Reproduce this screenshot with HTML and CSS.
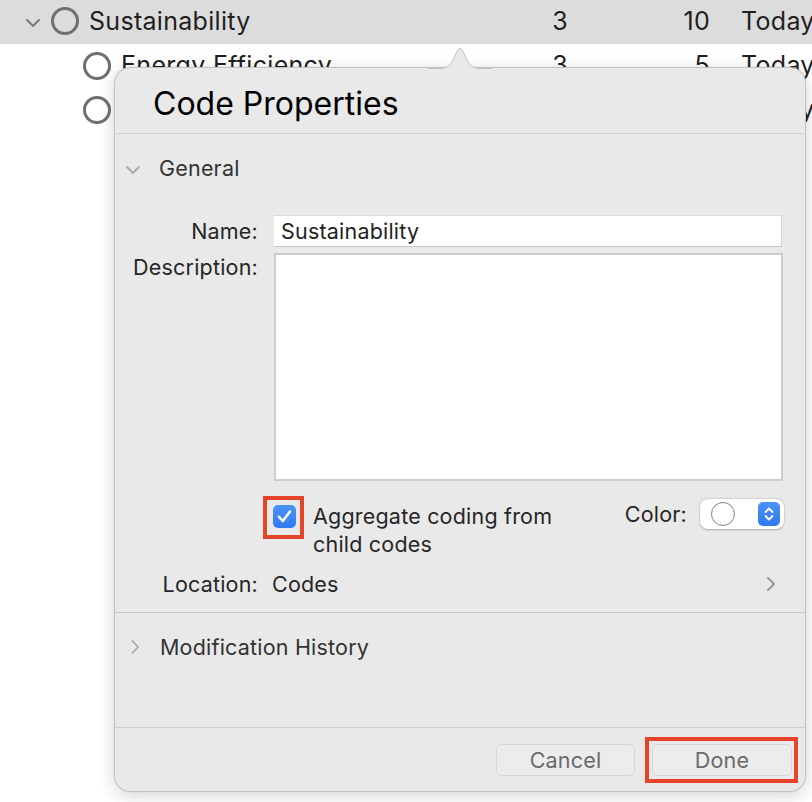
FILE: index.html
```html
<!DOCTYPE html>
<html>
<head>
<meta charset="utf-8">
<link rel="stylesheet" href="styles.css">
</head>
<body>
<div class="list">
  <div class="row selected">
    <span class="disclose"><svg width="16" height="10" viewBox="0 0 16 10"><path d="M2 2 L8 8 L14 2" fill="none" stroke="#7a7a7a" stroke-width="2" stroke-linecap="round" stroke-linejoin="round"/></svg></span>
    <span class="dot"></span>
    <span class="name">Sustainability</span>
    <span class="num c1">3</span>
    <span class="num c2">10</span>
    <span class="date">Today</span>
  </div>
  <div class="row child">
    <span class="dot"></span>
    <span class="name">Energy Efficiency</span>
    <span class="num c1">3</span>
    <span class="num c2">5</span>
    <span class="date">Today</span>
  </div>
  <div class="row child">
    <span class="dot"></span>
    <span class="name">Waste Reduction</span>
    <span class="num c1">2</span>
    <span class="num c2">4</span>
    <span class="date">Today</span>
  </div>
</div>

<div class="popover">
  <svg class="arrow" width="64" height="22" viewBox="0 0 64 22">
    <path d="M0 21.5 L12 21.5 C19 21.5 22 18 25 13 C28 8 29 1.5 32 1.5 C35 1.5 36 8 39 13 C42 18 45 21.5 52 21.5 L64 21.5 L64 22 L0 22 Z" fill="#e9e9e9"/>
    <path d="M0 21.5 L12 21.5 C19 21.5 22 18 25 13 C28 8 29 1.5 32 1.5 C35 1.5 36 8 39 13 C42 18 45 21.5 52 21.5 L64 21.5" fill="none" stroke="#c2c2c2" stroke-width="1"/>
  </svg>
  <div class="pop-header">Code Properties</div>
  <div class="section-head">
    <svg class="chev-down" width="16" height="10" viewBox="0 0 16 10"><path d="M2 2 L8 8 L14 2" fill="none" stroke="#a8a8a8" stroke-width="1.8" stroke-linecap="round" stroke-linejoin="round"/></svg>
    <span>General</span>
  </div>
  <div class="form">
    <div class="field-row">
      <label class="lbl">Name:</label>
      <div class="textfield">Sustainability</div>
    </div>
    <div class="field-row top">
      <label class="lbl desc-lbl">Description:</label>
      <div class="textarea"></div>
    </div>
    <div class="opt-row">
      <div class="opt-left">
        <span class="mark-box"><span class="checkbox"><svg width="23" height="23" viewBox="0 0 23 23"><path d="M6 11.8 L9.8 16 L17 6.5" fill="none" stroke="#fff" stroke-width="2.6" stroke-linecap="round" stroke-linejoin="round"/></svg></span></span>
        <span class="opt-text">Aggregate coding from<br>child codes</span>
      </div>
      <div class="color-group">
        <span class="color-lbl">Color:</span>
        <div class="popup">
          <span class="swatch"></span>
          <span class="stepper"><svg width="22" height="24" viewBox="0 0 22 24"><path d="M7.5 10 L11 6.5 L14.5 10 M7.5 14 L11 17.5 L14.5 14" fill="none" stroke="#fff" stroke-width="1.8" stroke-linecap="round" stroke-linejoin="round"/></svg></span>
        </div>
      </div>
    </div>
    <div class="loc-row">
      <span class="lbl">Location:</span>
      <span class="loc-val">Codes</span>
      <svg class="chev-right" width="12" height="18" viewBox="0 0 12 18"><path d="M3 3 L9 9 L3 15" fill="none" stroke="#9a9a9a" stroke-width="2" stroke-linecap="round" stroke-linejoin="round"/></svg>
    </div>
  </div>
  <div class="section-head history">
    <svg class="chev-r-small" width="10" height="16" viewBox="0 0 10 16"><path d="M2.5 2 L8 8 L2.5 14" fill="none" stroke="#a8a8a8" stroke-width="1.8" stroke-linecap="round" stroke-linejoin="round"/></svg>
    <span>Modification History</span>
  </div>
  <div class="spacer"></div>
  <div class="footer">
    <button class="btn cancel">Cancel</button>
    <span class="mark-btn"><button class="btn">Done</button></span>
  </div>
</div>
</body>
</html>
```

FILE: styles.css
```css
* { box-sizing: border-box; }
html, body {
  margin: 0;
  padding: 0;
  background: #ffffff;
  width: 812px;
  height: 802px;
  overflow: hidden;
  font-family: Inter, "Noto Sans", "Liberation Sans", sans-serif;
  color: #1f1f1f;
}
.list { display: flex; flex-direction: column; }
.row {
  height: 44px;
  display: flex;
  align-items: center;
  font-size: 25px;
  letter-spacing: 0.3px;
  white-space: nowrap;
  padding-bottom: 2px;
}
.row.selected { background: #dcdcdc; }
.disclose { width: 51px; display: flex; justify-content: flex-end; padding-right: 10px; padding-top: 4px; }
.row.child { padding-left: 83px; }
.dot {
  width: 28px;
  height: 28px;
  border-radius: 50%;
  border: 3px solid #6f6f6f;
  margin-right: 10px;
  flex: none;
}
.row.child .dot { margin-top: 2px; }
.name { flex: 1; }
.num { text-align: right; }
.c1 { width: 40px; }
.c2 { width: 142px; }
.date { width: 71px; padding-left: 31px; box-sizing: content-box; }

.popover {
  position: absolute;
  left: 114px;
  top: 67px;
  width: 692px;
  height: 725px;
  background: #e9e9e9;
  border: 1px solid #c2c2c2;
  border-radius: 16px;
  box-shadow: 0 4px 18px rgba(0,0,0,0.16), 0 0 2px rgba(0,0,0,0.08);
  display: flex;
  flex-direction: column;
}
.arrow {
  position: absolute;
  left: 313px;
  top: -21px;
}
.pop-header {
  height: 66px;
  border-bottom: 1px solid #d2d2d2;
  padding-left: 38px;
  font-size: 32px;
  color: #000;
  display: flex;
  align-items: center;
  padding-top: 6px;
}
.section-head {
  display: flex;
  align-items: center;
  height: 32px;
  margin-top: 18px;
  font-size: 21.5px;
  letter-spacing: 0.2px;
  color: #333;
}
.chev-down { margin-left: 10px; margin-right: 18px; margin-top: 4px; }
.form {
  display: flex;
  flex-direction: column;
  padding-left: 16px;
  padding-right: 23px;
  margin-top: 31px;
  font-size: 21.5px;
  letter-spacing: 0.2px;
  color: #262626;
}
.field-row { display: flex; align-items: center; margin-bottom: 6px; }
.field-row.top { align-items: flex-start; }
.lbl { width: 127px; text-align: right; flex: none; }
.desc-lbl { margin-top: 1px; }
.textfield {
  margin-left: 16px;
  flex: 1;
  height: 32px;
  background: #fff;
  border-top: 1px solid #dadada;
  border-bottom: 1px solid #c4c4c4;
  border-right: 1px solid #d6d6d6;
  padding-left: 7px;
  display: flex;
  align-items: center;
  color: #1f1f1f;
}
.textarea {
  margin-left: 16px;
  flex: 1;
  height: 228px;
  background: #fff;
  border: 2px solid #cdcdcd;
  margin-right: -1px;
}
.opt-row {
  display: flex;
  justify-content: space-between;
  margin-top: 9px;
  padding-left: 132px;
  margin-right: -2px;
}
.opt-left { display: flex; align-items: flex-start; }
.mark-box {
  display: flex;
  border: 4px solid #e5432a;
  padding: 5px 4px 7px 6px;
}
.checkbox {
  width: 23px;
  height: 23px;
  border-radius: 5px;
  background: linear-gradient(#4b93f7, #2f7af2);
  display: flex;
  flex: none;
}
.opt-text { margin-left: 9px; line-height: 28px; padding-top: 6px; }
.color-group { display: flex; align-items: center; align-self: flex-start; margin-top: 3px; }
.color-lbl { margin-right: 13px; }
.popup {
  width: 84px;
  height: 30px;
  background: #fff;
  border-radius: 8px;
  box-shadow: 0 0.5px 2px rgba(0,0,0,0.25), 0 0 0 0.5px rgba(0,0,0,0.06);
  display: flex;
  align-items: center;
  justify-content: space-between;
  padding: 0 4px 0 11px;
}
.swatch {
  width: 24px;
  height: 24px;
  border-radius: 50%;
  border: 1.5px solid #808080;
}
.stepper {
  width: 22px;
  height: 24px;
  border-radius: 5px;
  background: linear-gradient(#4a92f7, #2f79f1);
  display: flex;
}
.loc-row {
  display: flex;
  align-items: center;
  margin-top: 10px;
  margin-bottom: 12px;
  height: 32px;
}
.loc-val { margin-left: 14px; flex: 1; }
.chev-right { margin-right: 5px; }
.history {
  margin-top: 0;
  border-top: 1px solid #c9c9c9;
  height: 68px;
}
.chev-r-small { margin-left: 15px; margin-right: 20px; }
.spacer { flex: 1; }
.footer {
  height: 64px;
  border-top: 1px solid #cfcfcf;
  display: flex;
  justify-content: flex-end;
  align-items: flex-start;
  padding-top: 9px;
  padding-right: 7px;
  gap: 10px;
}
.btn {
  font-family: Inter, "Noto Sans", "Liberation Sans", sans-serif;
  font-size: 21.5px;
  letter-spacing: 0.2px;
  color: #6a6a6a;
  width: 139px;
  height: 32px;
  background: #ececec;
  border: 1px solid #d6d6d6;
  border-radius: 6px;
  padding: 0;
  display: block;
}
.cancel { margin-top: 7px; }
.mark-btn {
  display: flex;
  border: 4px solid #e5432a;
  padding: 3px 2px 3px 3px;
}
.mark-btn .btn { width: 140px; }
```
